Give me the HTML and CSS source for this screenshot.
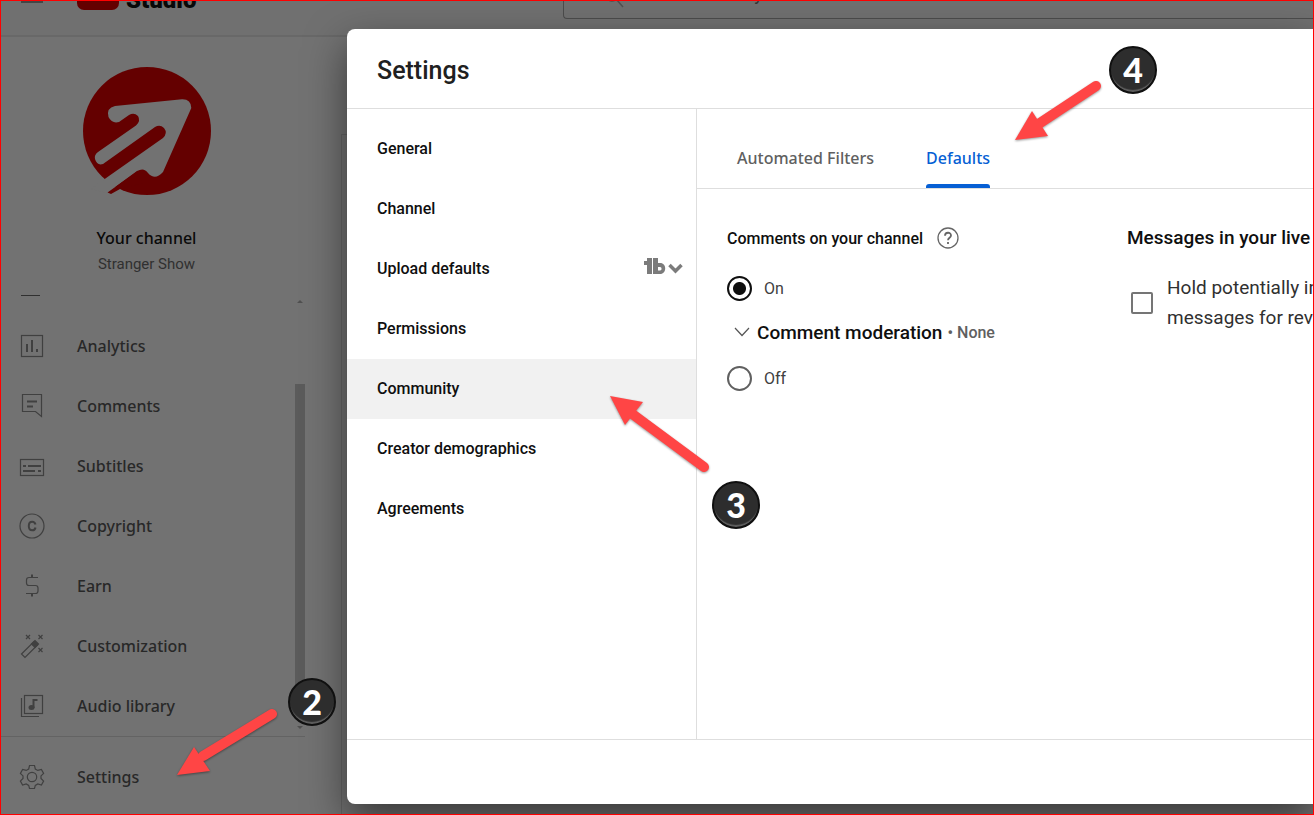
FILE: index.html
```html
<!DOCTYPE html>
<html lang="en">
<head>
<meta charset="utf-8">
<title>Channel settings - Studio</title>
<link rel="stylesheet" href="styles.css">
</head>
<body>
<div class="frame">
  <header class="topbar">
    <button class="menu-btn" aria-label="Menu"></button>
    <div class="brand"><span class="brand-mark"></span><span class="brand-name">Studio</span></div>
    <div class="search">
      <svg width="24" height="24" viewBox="0 0 24 24" fill="none" stroke="currentColor" stroke-width="1.5"><circle cx="10" cy="10" r="6"/><path d="M14.5 14.5L21 22"/></svg>
      <input type="text" aria-label="Search" placeholder="Search across your channel">
    </div>
  </header>

  <div class="workspace">
    <aside class="sidebar">
      <div class="profile">
        <svg class="avatar" viewBox="0 0 128 128" width="128" height="128">
          <circle cx="64" cy="64" r="64" fill="#640000"/>
          <path fill="#727272" d="M32 39L99 32.3Q108 32 108.3 41L80 105Q72 114 65 106Q61 100 54 104L24 126L8 122L21.700 112L80 71Q85 66 81 61Q77 57 72 60L20 97Q14 99 12 92Q11 88 15 85L53 58.500Q58 54 55 49Q51 45 46 48L36 55Q29 57 25.500 50Q23 41 32 39Z"/>
          <path fill="#640000" d="M24.500 125.500L54 104.500L60 116L37 122L28 127Z"/>
        </svg>
        <div class="profile-title">Your channel</div>
        <div class="profile-name">Stranger Show</div>
      </div>
      <div class="nav-scroll">
        <nav class="nav">
          <div class="cut-icon"></div>
          <a class="nav-item" href="#"><svg class="icon" viewBox="0 0 26 26"><rect x="2.500" y="2.500" width="21" height="21"/><path class="thick" d="M8 11v8M13 7v12M18 16v3"/></svg>Analytics</a>
          <a class="nav-item" href="#"><svg class="icon" viewBox="0 0 26 26"><path d="M3.500 1.500h19v22l-6-5h-13z"/><path class="thick" d="M8 8.500h10M8 13.500h6"/></svg>Comments</a>
          <a class="nav-item" href="#"><svg class="icon" viewBox="0 0 26 26"><rect x="1.500" y="6.500" width="23" height="16"/><path class="thick" d="M4 13h3M9 13h13M4 18h12M19 18h3"/></svg>Subtitles</a>
          <a class="nav-item" href="#"><svg class="icon" viewBox="0 0 26 26"><circle cx="13" cy="13" r="12"/><path class="thick" d="M16.500 11.500C16 9.500 15 8.700 13.200 8.700C10.800 8.700 9.800 10.500 9.800 13S10.800 17.300 13.200 17.300C15 17.300 16.200 16.500 16.500 14.500"/></svg>Copyright</a>
          <a class="nav-item" href="#"><svg class="icon" viewBox="0 0 26 26"><path d="M19 4.500H10Q7.500 4.500 7.500 7V10Q7.500 12.500 10 12.500H16.500Q19 12.500 19 15V18Q19 20.500 16.500 20.500H7"/><path class="thick" d="M13 1.500v3M13 20.500v3"/></svg>Earn</a>
          <a class="nav-item" href="#"><svg class="icon" viewBox="0 0 26 26"><path d="M2.500 21L15 8.500L18.500 12L6 24.500Z"/><path fill="currentColor" d="M12.500 11L16 7.500L19.500 11L16 14.500Z"/><path d="M7 2l4 4M11 2l-4 4M19.500 2l4 4M23.500 2l-4 4M19.500 15l4 4M23.500 15l-4 4"/></svg>Customization</a>
          <a class="nav-item" href="#"><svg class="icon" viewBox="0 0 26 26"><rect x="5.500" y="2.500" width="18" height="18"/><path d="M2.500 5v18.500H20"/><ellipse cx="12.500" cy="14.500" rx="3" ry="2.500" fill="currentColor" stroke="none"/><path class="thick" d="M14.500 15V7h4"/></svg>Audio library</a>
        </nav>
        <div class="scrollbar"><span class="arrow-up"></span><span class="thumb"></span><span class="arrow-down"></span></div>
      </div>
      <div class="nav-bottom">
        <a class="nav-item" href="#"><svg class="icon" viewBox="0 0 26 26"><path d="M10.500 1.500h5l.8 3.500l2.500 1.400l3.600-1l2.200 4l-2.600 2.500v2.600l2.600 2.500l-2.200 4l-3.600-1l-2.500 1.400l-.8 3.100h-5l-.8-3.100l-2.500-1.400l-3.600 1l-2.200-4l2.600-2.500v-2.600L1.400 9.400l2.200-4l3.600 1L9.700 5z"/><circle cx="13" cy="13" r="4.700"/></svg>Settings</a>
      </div>
    </aside>
    <div class="page-card"></div>
  </div>

  <section class="dialog" role="dialog" aria-label="Settings">
    <h1 class="dialog-title">Settings</h1>
    <div class="dialog-body">
      <nav class="sections">
        <a href="#">General</a>
        <a href="#">Channel</a>
        <a href="#">Upload defaults
          <svg class="tb" width="40" height="20" viewBox="0 0 40 20"><path fill="#7b7b7b" d="M3 1h5v16H3V8H0V4h3zM9 1h5v5h2c7 0 7 11 0 11H9z"/><path d="M14 10v3.500h2c2 0 2-3.500 0-3.500z" fill="#fff"/><path d="M25.500 8l6 6l6-6" fill="none" stroke="#7b7b7b" stroke-width="3.500"/></svg>
        </a>
        <a href="#">Permissions</a>
        <a class="current" href="#">Community</a>
        <a href="#">Creator demographics</a>
        <a href="#">Agreements</a>
      </nav>
      <div class="content">
        <div class="tabs" role="tablist">
          <button role="tab">Automated Filters</button>
          <button role="tab" class="active" aria-selected="true">Defaults</button>
        </div>
        <div class="panel">
          <div class="comments">
            <div class="group-title" id="ct">Comments on your channel
              <svg width="22" height="22" viewBox="0 0 22 22" fill="none" stroke="#666" stroke-width="1.300"><circle cx="11" cy="11" r="10"/><path stroke-width="1.800" d="M8 8.700C8 4.800 14 4.800 14 8.400C14 10.800 11 10.700 11 13.200M11 15v2"/></svg>
            </div>
            <div class="options" role="radiogroup" aria-labelledby="ct">
              <label class="option"><input type="radio" name="comments" checked>On</label>
              <button class="moderation"><svg width="16" height="10" viewBox="0 0 16 10" fill="none" stroke="#555" stroke-width="1.200"><path d="M1 1l7 7.500L15 1"/></svg><span>Comment moderation</span> <small>• None</small></button>
              <label class="option"><input type="radio" name="comments">Off</label>
            </div>
          </div>
          <div class="messages">
            <div class="messages-title">Messages in your live</div>
            <label class="check"><input type="checkbox"><span>Hold potentially inappropriate chat<br>messages for review</span></label>
          </div>
        </div>
      </div>
    </div>
    <footer class="dialog-footer"></footer>
  </section>

  <svg class="pointer pointer-settings" width="110" height="80" viewBox="0 0 110 80"><path class="shaft" d="M102 10L33 52"/><path class="head" d="M7 71L24 43L40 67Z"/></svg>
  <svg class="pointer pointer-community" width="110" height="85" viewBox="0 0 110 85"><path class="shaft" d="M98 76L25 22"/><path class="head" d="M4 5L37 11L19 34Z"/></svg>
  <svg class="pointer pointer-defaults" width="100" height="75" viewBox="0 0 100 75"><path class="shaft" d="M86 12L27 51"/><path class="head" d="M5 66L22 37L38 62Z"/></svg>
  <span class="step step-2">2</span>
  <span class="step step-3">3</span>
  <span class="step step-4">4</span>
</div>
</body>
</html>
```
FILE: styles.css
```css
* { box-sizing: border-box; }
body { margin: 0; font-family: Roboto, "Liberation Sans", sans-serif; color: #0f0f0f; }
a { color: inherit; text-decoration: none; }
button { font: inherit; color: inherit; background: none; border: 0; padding: 0; }

.frame {
  position: relative;
  display: flex;
  flex-direction: column;
  min-height: 100vh;
  overflow: hidden;
  border: 1px solid #f00;
  background: #727272;
}

.topbar {
  display: flex;
  align-items: flex-end;
  height: 36px;
  overflow: hidden;
  border-bottom: 2px solid #686868;
  background: #707070;
  flex: none;
}
.menu-btn { width: 22px; height: 2px; margin: 0 34px 32px 20px; background: #454545; flex: none; }
.brand { display: flex; align-items: flex-end; gap: 7px; width: 486px; padding-bottom: 20px; flex: none; }
.brand-mark { width: 42px; height: 32px; margin-bottom: 5px; border-radius: 7px; background: #640000; }
.brand-name { font-size: 24px; line-height: 30px; font-weight: 900; color: #080808; }
.search {
  display: flex;
  align-items: center;
  gap: 10px;
  flex: 1;
  height: 44px;
  margin-bottom: 16px;
  padding: 0 38px;
  border: 1px solid #4c4c4c;
  border-right: 0;
  border-radius: 4px 0 0 4px;
  color: #505050;
}
.search input { flex: 1; border: 0; padding: 0 0 8px; background: none; font: 18px Roboto, sans-serif; color: #333; outline: 0; }
.search input::placeholder { color: #333; }

.workspace { display: flex; flex: 1; }
.sidebar { display: flex; flex-direction: column; width: 304px; flex: none; }
.profile { display: flex; flex-direction: column; align-items: center; width: 291px; padding-top: 30px; }
.avatar { margin-bottom: 31px; }
.profile-title { font: 500 16px/24px "Noto Sans", sans-serif; color: #0a0a0a; }
.profile-name { margin-top: 4px; font-size: 15px; line-height: 20px; color: #303030; }
.nav-scroll { display: flex; justify-content: space-between; flex: 1; margin-top: 18px; }
.nav { flex: 1; }
.cut-icon { width: 19px; height: 4px; margin: 0 20px 20px; border-bottom: 1px solid #303030; }
.nav-item {
  display: flex;
  align-items: center;
  gap: 32px;
  height: 60px;
  padding-left: 18px;
  font: 500 16px/24px "Noto Sans", sans-serif;
  color: #282828;
}
.icon { width: 26px; height: 26px; fill: none; stroke: currentColor; color: #404040; stroke-width: 1.2; }
.thick { stroke-width: 2; }
.scrollbar { display: flex; flex-direction: column; align-items: center; width: 10px; padding: 8px 0 7px; }
.thumb { flex: 1; width: 10px; margin: 81px 0 26px; background: #5b5b5b; }
.arrow-up, .arrow-down { border: 3px solid transparent; border-top: 0; border-bottom: 3px solid #505050; }
.arrow-down { border-bottom: 0; border-top: 3px solid #505050; }
.nav-bottom { height: 78px; padding-top: 10px; border-top: 1px solid #636363; flex: none; }
.page-card { flex: 1; margin: 97px 0 0 36px; border: 1px solid #646464; border-width: 1px 0 0 1px; }

.dialog {
  position: absolute;
  inset: 28px 0 10px 346px;
  display: flex;
  flex-direction: column;
  border-radius: 8px 0 0 8px;
  background: #fff;
  box-shadow: 0 16px 40px rgba(0, 0, 0, 0.5);
}
.dialog-title { margin: 0; padding: 26px 30px 22px; border-bottom: 1px solid #dedede; font-size: 25px; line-height: 31px; font-weight: 500; color: #202020; }
.dialog-body { display: flex; flex: 1; min-height: 0; }
.sections { width: 350px; padding-top: 10px; border-right: 1px solid #dedede; flex: none; }
.sections a { display: flex; align-items: center; justify-content: space-between; height: 60px; padding: 0 12px 2px 30px; font-size: 16px; font-weight: 500; }
.sections .current { background: #f1f1f1; }
.tb { margin-top: -3px; }
.content { flex: 1; min-width: 0; overflow: hidden; }
.tabs { display: flex; gap: 52px; height: 80px; padding-left: 40px; border-bottom: 1px solid #dedede; }
.tabs button { position: relative; padding-top: 19px; font: 500 16px/24px "Noto Sans", sans-serif; color: #606060; }
.tabs .active { color: #065fd4; }
.tabs .active::after { content: ""; position: absolute; left: 0; right: 0; bottom: 0; height: 4px; border-radius: 3px 3px 0 0; background: #065fd4; }
.panel { display: flex; padding: 36px 0 0 30px; }
.comments { width: 400px; flex: none; }
.group-title { display: flex; align-items: center; gap: 14px; height: 26px; font-size: 16px; font-weight: 500; }
.options { display: flex; flex-direction: column; align-items: flex-start; gap: 19px; padding-top: 24px; }
.option { display: flex; align-items: center; gap: 12px; height: 26px; font-size: 16px; color: #404040; }
.option input { appearance: none; width: 25px; height: 25px; margin: 0; border: 2px solid #606060; border-radius: 50%; background: #fff; }
.option input:checked { border-color: #0f0f0f; background: radial-gradient(circle, #0f0f0f 6px, #fff 7px); }
.moderation { display: flex; align-items: center; gap: 7px; height: 24px; margin-bottom: 2px; padding-left: 7px; font-size: 19px; font-weight: 500; white-space: nowrap; }
.moderation small { margin-left: -2px; font-size: 16px; color: #606060; }
.messages { flex: none; white-space: nowrap; }
.messages-title { font-size: 19px; line-height: 26px; font-weight: 500; }
.check { display: flex; align-items: center; gap: 14px; padding: 22px 0 0 4px; font-size: 19px; line-height: 30px; color: #303030; }
.check input { appearance: none; width: 22px; height: 22px; margin: 0; border: 2px solid #757575; border-radius: 2px; }
.dialog-footer { height: 65px; border-top: 1px solid #dedede; flex: none; }

.pointer { position: absolute; fill: none; filter: drop-shadow(0 1px 1px rgba(0, 0, 0, 0.4)); }
.shaft { stroke: #ff4545; stroke-width: 10; stroke-linecap: round; }
.head { fill: #ff4545; }
.pointer-settings { left: 169px; top: 703px; }
.pointer-community { left: 605px; top: 390px; }
.pointer-defaults { left: 1009px; top: 73px; }
.step {
  position: absolute;
  display: flex;
  align-items: center;
  justify-content: center;
  width: 48px;
  height: 48px;
  border: 2px solid #101010;
  border-radius: 50%;
  background: #2d2d2d;
  box-shadow: inset 0 -3px 1px -1px #606060;
  color: #fff;
  font: 900 34px/44px Lato, sans-serif;
}
.step-2 { left: 287px; top: 677px; }
.step-3 { left: 711px; top: 480px; }
.step-4 { left: 1108px; top: 45px; }
```
